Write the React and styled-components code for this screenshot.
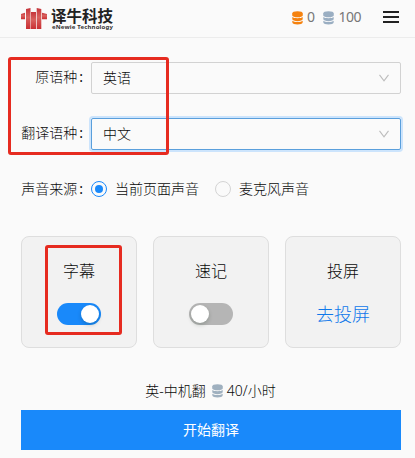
import React, { useState } from 'react';
import styled, { createGlobalStyle } from 'styled-components';

const GlobalStyle = createGlobalStyle`
  * {
    box-sizing: border-box;
  }

  body {
    margin: 0;
    background-color: #fafafa;
    color: #0a0a0a;
    font-family: "Noto Sans", "Noto Sans CJK SC", sans-serif;
    font-size: 14px;
    font-weight: 300;
    overflow: hidden;
  }
`;

const Page = styled.div`
  position: relative;
  width: 415px;
  height: 458px;
  background-color: #fafafa;
`;

const Header = styled.header`
  display: flex;
  justify-content: space-between;
  height: 38px;
  padding: 0 16px 0 21px;
  border-bottom: 1px solid #ececec;
`;

const Logo = styled.div`
  display: flex;
  gap: 4px;
  padding-top: 8px;
`;

const LogoText = styled.div`
  display: flex;
  flex-direction: column;
`;

const BrandName = styled.span`
  height: 15px;
  line-height: 14px;
  font-family: "Noto Sans CJK SC", sans-serif;
  font-size: 15.5px;
  font-weight: 700;
  color: #222;
  white-space: nowrap;
`;

const BrandSub = styled.span`
  height: 8px;
  padding-left: 1px;
  line-height: 9px;
  font-family: "Noto Sans", sans-serif;
  font-size: 6px;
  font-weight: bold;
  letter-spacing: 0.18px;
  color: #333;
  white-space: nowrap;
`;

const HeaderRight = styled.div`
  display: flex;
  align-items: center;
  height: 34px;
`;

const Balance = styled.div`
  display: flex;
  align-items: center;
  gap: 4px;
  margin-right: ${props => props.$gap}px;
  font-size: 14px;
  font-weight: 400;
  line-height: 18px;
  letter-spacing: -0.5px;
  color: #777;

  svg {
    position: relative;
    top: 1px;
  }
`;

const MenuButton = styled.button`
  display: flex;
  flex-direction: column;
  justify-content: space-between;
  width: 16px;
  height: 12px;
  padding: 0;
  border: none;
  background: none;
  cursor: pointer;

  span {
    width: 16px;
    height: 2px;
    background-color: #222;
  }
`;

const Form = styled.div`
  display: flex;
  flex-direction: column;
  padding: 24px 14px 0 21px;
`;

const FormRow = styled.div`
  display: flex;
  align-items: center;
  height: 32px;
  margin-bottom: ${props => props.$bottom || 24}px;
`;

const Label = styled.label`
  width: 70px;
  padding: 0 8px 2px 0;
  text-align: right;
  line-height: 20px;
  white-space: nowrap;

  &::after {
    content: ":";
    margin-left: 2px;
    font-weight: 400;
  }
`;

const SelectBox = styled.div`
  display: flex;
  flex: 1;
  align-items: center;
  justify-content: space-between;
  height: 32px;
  padding: 0 11px;
  border: 1px solid ${props => (props.$focused ? '#5a9fdc' : '#d2d2d2')};
  border-radius: 2px;
  box-shadow: ${props => (props.$focused ? '0 0 0 2px #cce4fc' : 'none')};
  line-height: 20px;
  cursor: pointer;
`;

const RadioOption = styled.div`
  display: flex;
  align-items: center;
  gap: 8px;
  height: 20px;
  margin: 0 16px 2px 0;
  line-height: 20px;
  white-space: nowrap;
  cursor: pointer;
`;

const RadioCircle = styled.span`
  display: flex;
  align-items: center;
  justify-content: center;
  width: 16px;
  height: 16px;
  border: 1px solid ${props => (props.$checked ? '#1989fa' : '#d4d4d4')};
  border-radius: 50%;

  &::after {
    content: "";
    width: 8px;
    height: 8px;
    border-radius: 50%;
    background-color: ${props => (props.$checked ? '#1989fa' : 'transparent')};
  }
`;

const Cards = styled.div`
  display: grid;
  grid-template-columns: repeat(3, 116px);
  gap: 16px;
`;

const Card = styled.div`
  display: flex;
  flex-direction: column;
  align-items: center;
  height: 112px;
  padding-top: 22px;
  border: 1px solid #dedede;
  border-radius: 8px;
  background-color: #f2f2f2;
`;

const CardTitle = styled.div`
  height: 24px;
  margin-bottom: 20px;
  font-size: 16px;
  line-height: 24px;
`;

const Switch = styled.button`
  display: flex;
  align-items: center;
  justify-content: ${props => (props.$on ? 'flex-end' : 'flex-start')};
  width: 44px;
  height: 22px;
  padding: 0 2px;
  border: none;
  border-radius: 11px;
  background-color: ${props => (props.$on ? '#1989fa' : '#b5b5b5')};
  cursor: pointer;

  &::after {
    content: "";
    width: 18px;
    height: 18px;
    border-radius: 50%;
    background-color: #fff;
    box-shadow: 0 2px 4px rgba(0, 35, 11, 0.2);
  }
`;

const CardLink = styled.a`
  font-size: 18px;
  line-height: 22px;
  color: #0f78ea;
  cursor: pointer;
`;

const Price = styled.div`
  display: flex;
  align-items: center;
  justify-content: center;
  height: 22px;
  margin: 31px 0 9px;
  padding-right: 1px;

  svg {
    position: relative;
    top: 1px;
    margin: 0 4px 0 6px;
  }
`;

const StartButton = styled.button`
  width: 380px;
  height: 40px;
  padding: 0 0 2px;
  border: none;
  background-color: #1989fa;
  color: #fff;
  font-family: inherit;
  font-size: 14px;
  cursor: pointer;
`;

const Highlight = styled.div`
  position: absolute;
  left: ${props => props.$x}px;
  top: ${props => props.$y}px;
  width: ${props => props.$w}px;
  height: ${props => props.$h}px;
  border: 3px solid #e62b20;
  border-radius: 3px;
  pointer-events: none;
`;

const LogoMark = () => (
  <svg width="26" height="21" viewBox="0 0 26 21">
    <defs>
      <linearGradient id="bars" x1="0" y1="0" x2="0" y2="1">
        <stop offset="0" stopColor="#c5343a" />
        <stop offset="0.45" stopColor="#d9625f" />
        <stop offset="1" stopColor="#c92f33" />
      </linearGradient>
    </defs>
    <g fill="url(#bars)">
      <path d="M0 6l4-1.2v6.4H0z" />
      <path d="M5 1l4.5-1v21H5z" />
      <path d="M10 4h5v17h-5z" />
      <path d="M15.7 0l4.6 1v20h-4.6z" />
      <path d="M21 4.8L26 6v5.2h-5z" />
    </g>
  </svg>
);

const Coins = ({ color }) => (
  <svg width="11" height="14" viewBox="0 0 11 14">
    <g fill={color}>
      <ellipse cx="5.5" cy="2.6" rx="5.2" ry="2.3" />
      <path d="M.3 2.6v1.7c0 2.7 10.4 2.7 10.4 0V2.6z" />
      <path d="M.3 6.1c1.8 1.6 8.6 1.6 10.4 0v2c0 2.7-10.4 2.7-10.4 0z" />
      <path d="M.3 9.8c1.8 1.6 8.6 1.6 10.4 0v1.5c0 2.9-10.4 2.9-10.4 0z" />
    </g>
  </svg>
);

const Arrow = () => (
  <svg width="10" height="8" viewBox="0 0 10 8" fill="none" stroke="#bcbcbc" strokeWidth="1.1">
    <path d="M.5 .8L5 6.8L9.5 .8" />
  </svg>
);

const App = () => {
  const [source, setSource] = useState('page');
  const [subtitle, setSubtitle] = useState(true);
  const [shorthand, setShorthand] = useState(false);

  return (
    <>
      <GlobalStyle />
      <Page>
        <Header>
          <Logo>
            <LogoMark />
            <LogoText>
              <BrandName>译牛科技</BrandName>
              <BrandSub>eNewie Technology</BrandSub>
            </LogoText>
          </Logo>
          <HeaderRight>
            <Balance $gap={9}><Coins color="#f5820f" />0</Balance>
            <Balance $gap={22}><Coins color="#9aaec2" />100</Balance>
            <MenuButton>
              <span></span>
              <span></span>
              <span></span>
            </MenuButton>
          </HeaderRight>
        </Header>

        <Form>
          <FormRow>
            <Label>原语种</Label>
            <SelectBox>英语<Arrow /></SelectBox>
          </FormRow>
          <FormRow>
            <Label>翻译语种</Label>
            <SelectBox $focused>中文<Arrow /></SelectBox>
          </FormRow>
          <FormRow $bottom={30}>
            <Label>声音来源</Label>
            <RadioOption onClick={() => setSource('page')}>
              <RadioCircle $checked={source === 'page'} />当前页面声音
            </RadioOption>
            <RadioOption onClick={() => setSource('mic')}>
              <RadioCircle $checked={source === 'mic'} />麦克风声音
            </RadioOption>
          </FormRow>

          <Cards>
            <Card>
              <CardTitle>字幕</CardTitle>
              <Switch $on={subtitle} onClick={() => setSubtitle(!subtitle)} />
            </Card>
            <Card>
              <CardTitle>速记</CardTitle>
              <Switch $on={shorthand} onClick={() => setShorthand(!shorthand)} />
            </Card>
            <Card>
              <CardTitle>投屏</CardTitle>
              <CardLink>去投屏</CardLink>
            </Card>
          </Cards>

          <Price>英-中机翻<Coins color="#9fb0bf" />40/小时</Price>
          <StartButton>开始翻译</StartButton>
        </Form>

        <Highlight $x={8} $y={57} $w={161} $h={98} />
        <Highlight $x={45} $y={245} $w={77} $h={90} />
      </Page>
    </>
  );
};

export default App;
